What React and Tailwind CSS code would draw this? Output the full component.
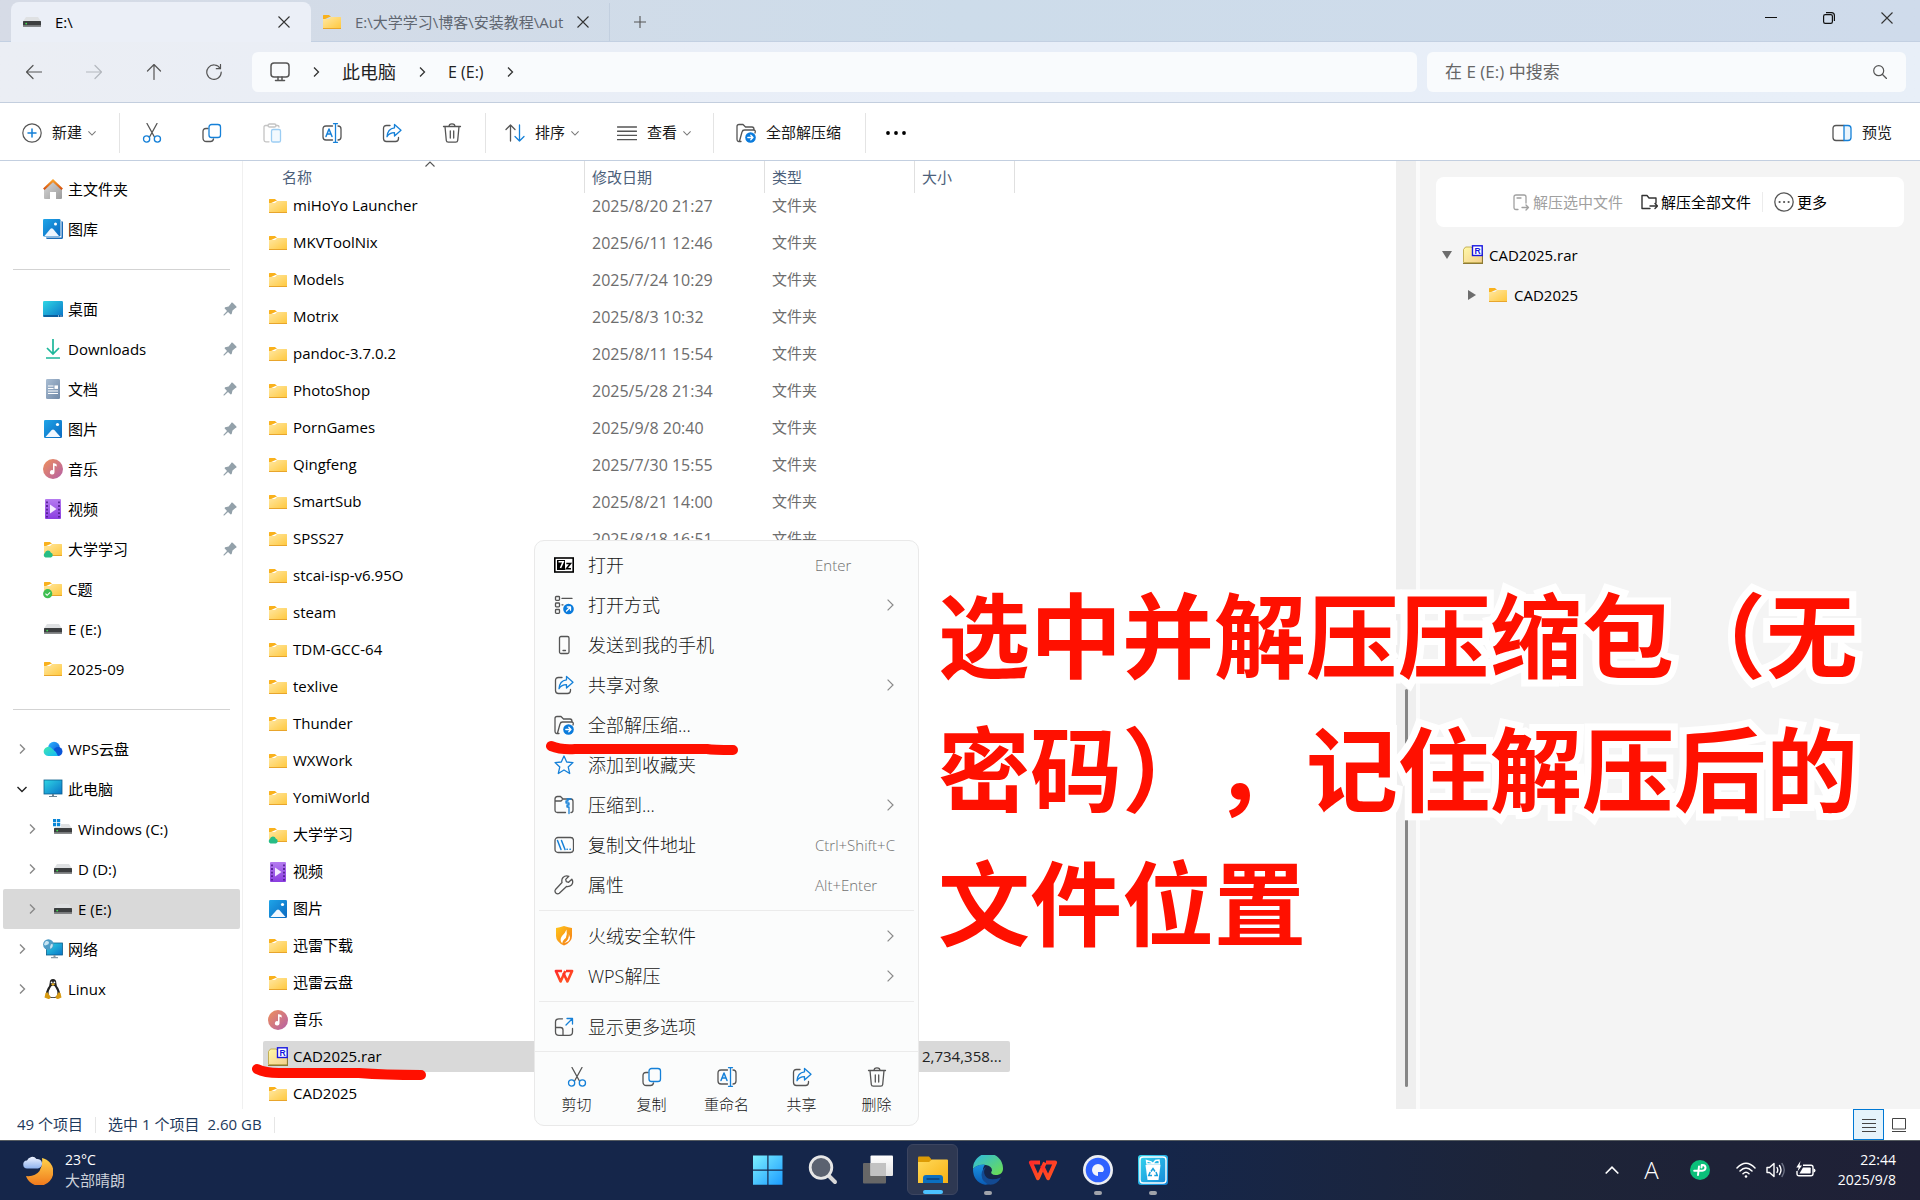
import React from "react";

const UI = "font-['Open_Sans','Noto_Sans_CJK_SC',sans-serif]";

/* ---------- shared gradients ---------- */
function Gradients() {
  const g = (id, a, b, diag) => (
    <linearGradient id={id} x1="0" y1="0" x2={diag ? "1" : "0"} y2="1">
      <stop offset="0" stopColor={a} />
      <stop offset="1" stopColor={b} />
    </linearGradient>
  );
  return (
    <svg className="absolute h-0 w-0" aria-hidden="true">
      <defs>
        {g("folder", "#ffe8a4", "#ffc83d", true)}
        {g("blue", "#1fa5e8", "#0a68c0", true)}
        {g("desk", "#2fd6e4", "#0a74c8", true)}
        {g("down", "#35c98b", "#12a6b0")}
        {g("doc", "#a9bdd3", "#6f88a6", true)}
        {g("music", "#f0915a", "#b35fa8", true)}
        {g("video", "#b57bf0", "#8a3de0")}
        {g("home", "#d8d8d8", "#9c9c9c", true)}
        {g("roof", "#f9a02b", "#d4500f")}
        {g("win", "#7df0ff", "#1b9cff", true)}
        {g("cloudA", "#3fe8b0", "#15b8f8", true)}
        {g("cloudB", "#2fb7ff", "#0a56d8", true)}
        {g("moon", "#ffd24a", "#f0781c")}
        {g("mist", "#eef3ff", "#8eb2ee")}
        {g("edgeGreen", "#2bb7e8", "#6fe04a", true)}
        {g("edgeBlue", "#1a92e0", "#0a5bb5")}
        {g("rar", "#fff9a8", "#f4cf8c", true)}
        {g("shield", "#ffc61a", "#f57a16", true)}
        {g("bin", "#35d7ee", "#1385d8", true)}
        {g("wps", "#ff2a2a", "#ff5a1f", true)}
        {g("glass", "#ffffff", "#e2e2e2")}
        {g("taskFolder", "#ffd95a", "#f7b113", true)}
      </defs>
    </svg>
  );
}

/* ---------- coloured icons ---------- */
const FolderShape = () => (
  <>
    <path d="M1 3.500Q1 3 1.600 3H7l2 2h-1.500L1 8z" fill="#f9b11c" />
    <path d="M1 7h6l2-2h9.500q.5 0 .5.500V16.500H1z" fill="url(#folder)" />
    <path d="M1 16.500h18" stroke="#e8a52c" strokeWidth="1" />
  </>
);
const Folder = () => (
  <svg viewBox="0 0 20 20" className="h-5 w-5 shrink-0"><FolderShape /></svg>
);
const FolderCloud = () => (
  <svg viewBox="0 0 20 20" className="h-5 w-5 shrink-0">
    <FolderShape />
    <path d="M2.500 18.500a2.600 2.600 0 0 1-.6-4.600 3.100 3.100 0 0 1 6-.2 2.500 2.500 0 0 1 .1 4.800z" fill="#27bd86" />
  </svg>
);
const FolderCheck = () => (
  <svg viewBox="0 0 20 20" className="h-5 w-5 shrink-0">
    <FolderShape />
    <circle cx="4.700" cy="14.700" r="4.600" fill="#3fbf52" />
    <path d="M2.500 14.700l1.600 1.600 3-3" fill="none" stroke="#fff" strokeWidth="1.100" />
  </svg>
);
const DriveShape = () => (
  <>
    <path d="M4 5h12l3 4.500H1z" fill="#dfe1e3" />
    <rect x="1" y="9" width="18" height="5.500" rx=".5" fill="#3c3e40" />
    <rect x="1" y="13" width="18" height="1.500" fill="#77797b" />
    <circle cx="4.200" cy="11.600" r=".9" fill="#3fe04f" />
  </>
);
const Drive = () => (
  <svg viewBox="0 0 20 20" className="h-5 w-5 shrink-0"><DriveShape /></svg>
);
const DriveWin = () => (
  <svg viewBox="0 0 20 20" className="h-5 w-5 shrink-0">
    <DriveShape />
    <rect width="8" height="8" fill="#fff" />
    <path d="M0 0h3.200v3.200H0zM4 0h3.200v3.200H4zM0 4h3.200v3.200H0zM4 4h3.200v3.200H4z" fill="#0a87d8" />
  </svg>
);
const Home = () => (
  <svg viewBox="0 0 20 20" className="h-5 w-5 shrink-0">
    <path d="M1 10.500L10 2l9 8.500V19a1 1 0 0 1-1 1h-5v-7H7v7H2a1 1 0 0 1-1-1z" fill="url(#home)" />
    <path d="M.8 10.200L10 1.600l9.200 8.600" fill="none" stroke="url(#roof)" strokeWidth="2.200" />
  </svg>
);
const Picture = () => (
  <svg viewBox="0 0 20 20" className="h-5 w-5 shrink-0">
    <rect x="1" y="1" width="18" height="18" rx="1.300" fill="url(#blue)" />
    <path d="M2.500 18L8.700 11q1.300-1.200 2.600 0l6.200 7z" fill="#f2f8ff" />
    <circle cx="14.500" cy="5.500" r="1.600" fill="#fff" />
  </svg>
);
const Gallery = () => (
  <svg viewBox="0 0 20 20" className="h-5 w-5 shrink-0">
    <path d="M3 18.500h15.500V2q1.500 0 1.500 1.500v15q0 1.500-1.500 1.500h-14q-1.500 0-1.500-1.500z" fill="#1a6bb8" />
    <rect width="17.500" height="17.500" rx="1.300" fill="url(#blue)" />
    <path d="M1.500 17L7.500 9.800q1.200-1 2.400 0L16 17z" fill="#eef6ff" />
    <circle cx="12.500" cy="5" r="1.500" fill="#fff" />
  </svg>
);
const Desktop = () => (
  <svg viewBox="0 0 20 20" className="h-5 w-5 shrink-0">
    <rect y="2" width="20" height="16" rx="1.200" fill="url(#desk)" />
    <path d="M.5 17h19" stroke="#0a4e8e" strokeWidth="1.500" />
    <path d="M15 17h1M17.500 17h1" stroke="#fff" strokeWidth="1" />
  </svg>
);
const Download = () => (
  <svg viewBox="0 0 20 20" className="h-5 w-5 shrink-0" fill="none" stroke="#1db79a" strokeWidth="1.700">
    <path d="M10 0v14.500M4 9l6 6 6-6M3 19h14" />
  </svg>
);
const Doc = () => (
  <svg viewBox="0 0 20 20" className="h-5 w-5 shrink-0">
    <rect x="3" width="14" height="20" rx="1.300" fill="url(#doc)" />
    <path d="M5 7h5.500M5 9.500h5.500M5 12h10M5 14.500h10" stroke="#fff" strokeWidth="1.200" />
    <rect x="11.500" y="6.400" width="3.500" height="3.500" fill="#fff" />
  </svg>
);
const Music = () => (
  <svg viewBox="0 0 20 20" className="h-5 w-5 shrink-0">
    <circle cx="10" cy="10" r="10" fill="url(#music)" />
    <path d="M10 13V4.200q2.800-.4 3.800 1.600l-.3 2q-.8-1.200-2-1.100V13.300a2.300 2.200 0 1 1-1.500-2z" fill="#fff" />
  </svg>
);
const Video = () => (
  <svg viewBox="0 0 20 20" className="h-5 w-5 shrink-0">
    <rect x="2" width="16" height="20" rx="1" fill="url(#video)" />
    <path d="M4 2.500v16M16 2.500v16" stroke="#4a1a86" strokeWidth="1.600" strokeDasharray="1.800 1.800" />
    <path d="M7 5.500l6.500 4.500L7 14.500z" fill="#f4eaff" />
  </svg>
);
const WpsCloud = () => (
  <svg viewBox="0 0 20 20" className="h-5 w-5 shrink-0">
    <circle cx="11" cy="8.500" r="5.800" fill="url(#cloudB)" />
    <circle cx="15" cy="12.500" r="4.500" fill="#0a56d8" />
    <path d="M5.200 17a4.600 4.600 0 1 1 3.200-8q4.500 3 6.600 8z" fill="url(#cloudA)" />
  </svg>
);
const Pc = () => (
  <svg viewBox="0 0 20 20" className="h-5 w-5 shrink-0">
    <rect x="1" y="1" width="18" height="14" fill="url(#desk)" stroke="#0b5e8c" strokeWidth=".8" />
    <path d="M9 15h2v2H9zM6 17h8v1H6z" fill="#6d8494" />
  </svg>
);
const Network = () => (
  <svg viewBox="0 0 20 20" className="h-5 w-5 shrink-0">
    <rect x="3.500" y="4" width="16" height="12" fill="url(#desk)" stroke="#0b5e8c" strokeWidth=".8" />
    <path d="M10.500 16h2v2h-2zM8 18h7v1.300H8z" fill="#8b9aa5" />
    <circle cx="5.400" cy="5.500" r="5.300" fill="#4f9cc6" />
    <path d="M3 2q3-.5 3 1.500T3.500 6Q2 7 1 5.500 1.500 3 3 2zM8 5l2 .5q0 3-2.500 4.500-1-2 .5-5z" fill="#c7e4f2" />
  </svg>
);
const Tux = () => (
  <svg viewBox="0 0 20 20" className="h-5 w-5 shrink-0">
    <path d="M10 0q3.300 0 3.300 4 0 2.500 2 5 2.200 3.500 1.400 7.500-1 2.500-6.700 2.500T3.300 16.500q-.8-4 1.400-7.500 2-2.500 2-5 0-4 3.300-4z" fill="#222" />
    <path d="M10 6.500q2 0 3 3 2.500 4 .5 8-3.500 1.500-7 0-2-4 .5-8 1-3 3-3z" fill="#fff" />
    <path d="M8 5.300l2-1.200 2 1.200-2 1.500z" fill="#eeb11c" />
    <circle cx="8.600" cy="3.400" r=".9" fill="#fff" /><circle cx="11.400" cy="3.400" r=".9" fill="#fff" />
    <path d="M2.500 14l2-.8 3.300 5q-.5 2-2.500 1.700L1.500 18.500zM17.500 14l-2-.8-3 5q.5 2 2.500 1.700l3.500-1.400z" fill="#d79a12" />
  </svg>
);
const Rar = () => (
  <svg viewBox="0 0 20 20" className="h-5 w-5 shrink-0">
    <path d="M.5 4.500L2.500 2h6l1 1.500h10v14H.5z" fill="url(#rar)" stroke="#b9a13a" strokeWidth=".8" />
    <path d="M0 18.500h19.500V8" fill="none" stroke="#8d7a36" strokeWidth="1.200" />
    <rect x="9.500" y=".8" width="9.700" height="9.700" fill="#fff" stroke="#1717e0" strokeWidth="1.400" />
    <text x="11.600" y="8.700" fontSize="8.500" fontWeight="700" fill="#1717e0" fontFamily="Liberation Sans, sans-serif">R</text>
  </svg>
);
const Pin = () => (
  <svg viewBox="0 0 14 14" className="h-[14px] w-[14px] shrink-0">
    <path d="M8.300.8q.7-.8 1.400 0l3.500 3.500q.8.700 0 1.400l-.7.300-3 2.500-.8 3.500-1 .6L5 10 1.300 13.500H.5v-.8L4 9 1.500 6.300l.6-1 3.500-.8L8 1.500z" fill="#93a1aa" />
  </svg>
);

/* ---------- line icons ---------- */
const Line = ({ children, className = "h-5 w-5", w = 1.3, box = 20 }) => (
  <svg viewBox={`0 0 ${box} ${box}`} className={`${className} shrink-0`} fill="none" stroke="#555" strokeWidth={w} strokeLinecap="round" strokeLinejoin="round">
    {children}
  </svg>
);
const B = "#1580d8";
const Chevron = ({ dir = "right", className = "h-[10px] w-[10px]", color = "#333", w = 1.3 }) => {
  const d = { right: "M3 .5l4.500 4.500L3 9.500", down: "M.5 3L5 7.500 9.500 3", up: "M.5 7.500L5 3l4.500 4.500" }[dir];
  return (
    <svg viewBox="0 0 10 10" className={`${className} shrink-0`} fill="none" stroke={color} strokeWidth={w}>
      <path d={d} />
    </svg>
  );
};
const Cut = () => (
  <Line>
    <path d="M5 .5l7.300 13.200M15 .5L7.700 13.700" />
    <g stroke={B}><circle cx="4.600" cy="16" r="3.100" /><circle cx="15.400" cy="16" r="3.100" /></g>
  </Line>
);
const Copy = () => (
  <Line>
    <path d="M6 5.500H4q-3 0-3 3V15q0 3.500 3.500 3.500h4q2.500 0 3-2.500" />
    <rect x="7" y="1.500" width="11.500" height="13" rx="2.600" stroke={B} />
  </Line>
);
const Paste = () => (
  <Line>
    <g stroke="#c4c4c4"><path d="M6 2.500H3.500Q2 2.500 2 4v13q0 1.800 1.800 1.800H7M14 2.500h1.500Q17 2.500 17 4" /><rect x="6" y="1" width="8" height="3" rx="1.500" /></g>
    <rect x="9.500" y="6.500" width="9" height="12.500" rx="1.600" stroke="#9ccdf3" fill="#f3f9fe" />
  </Line>
);
const Rename = () => (
  <Line>
    <path d="M10.500 3H4Q1 3 1 6v8q0 3 3 3h6.500M16 3q3 0 3 3v8q0 3-3 3" />
    <g stroke={B}><path d="M13.500 1v18M11.500.700h4M11.500 19.300h4" /><path d="M4 13.500L7 6l3 7.500M5 11h4" strokeWidth="1.500" /></g>
  </Line>
);
const Share = () => (
  <Line>
    <path d="M8 2.500H4.500Q1.500 2.500 1.500 5.500v10q0 3 3 3h9q3 0 3-3v-1" />
    <path d="M12.500 1.500l6.500 5.700-6.500 5.800V9.700q-5 0-7.500 4 .5-8 7.500-8.900z" stroke={B} />
  </Line>
);
const Trash = () => (
  <Line>
    <path d="M1.500 3.500h17M7 3.500q0-2.700 3-2.700t3 2.700M3 3.500l1.300 14q.2 1.700 2 1.700h7.400q1.800 0 2-1.700L17 3.500M8.300 8v7M11.700 8v7" />
  </Line>
);
const ExtractAll = () => (
  <Line>
    <path d="M5 18.500H3q-2 0-2-2.500V3.500q0-2 2-2h4l2.500 2.500H16q2 0 2 2.500M3.500 18L6 9q.5-2 2.500-2h9q2.500 0 1.500 3" />
    <circle cx="14.500" cy="14.500" r="5.300" fill="#0a7bdc" stroke="none" />
    <path d="M11.800 14.500h5M14.800 12.300l2.200 2.200-2.200 2.200" stroke="#fff" />
  </Line>
);
const OpenWith = () => (
  <Line>
    <rect x="1.500" y="1.500" width="4" height="3.800" rx=".8" /><rect x="1.500" y="8" width="4" height="3.800" rx=".8" /><rect x="1.500" y="14.500" width="4" height="3.800" rx=".8" />
    <path d="M8 3.400h10M8 9.800h1" />
    <circle cx="14.500" cy="14" r="5.300" fill="#0a7bdc" stroke="none" />
    <path d="M12.500 16l4-4M13.300 12h3.200v3.200" stroke="#fff" />
  </Line>
);
const SevenZip = () => (
  <svg viewBox="0 0 20 20" className="h-5 w-5 shrink-0">
    <rect x=".8" y="3" width="18.400" height="14" fill="#fff" stroke="#000" strokeWidth="1.600" />
    <rect x="3" y="5" width="8" height="10" fill="#000" />
    <path d="M4.500 6.800h4.700L6.500 13" fill="none" stroke="#fff" strokeWidth="1.600" />
    <path d="M12.300 8.500h4.200l-4 5.200h4.500" fill="none" stroke="#000" strokeWidth="1.600" />
  </svg>
);
const Phone = () => (
  <Line><rect x="5.500" y="1.500" width="9.500" height="17" rx="1.500" /><path d="M9 15.500h2.500" /></Line>
);
const Star = () => (
  <Line><path d="M10 1l2.700 6 6.300.6-4.800 4.300 1.500 6.600L10 15l-5.700 3.500 1.500-6.600L1 7.600 7.300 7z" stroke={B} /></Line>
);
const Zip = () => (
  <Line>
    <path d="M11.500 17.500H3.500Q1 17.500 1 15V4q0-2.500 2.500-2.500h3L9 4h8q2 0 2 2.500V15q0 2.500-2 2.500M1 6h6l2-2" />
    <path d="M14 4v2h-2v2h3v2h-2v2h2v6.500M13 4h4" stroke={B} />
  </Line>
);
const CopyPath = () => (
  <Line><rect x="1" y="2.500" width="18.500" height="15" rx="3" /><path d="M3.500 5.500l3.500 9M7.500 5.500l3.500 9M13 14.300h.3M16 14.300h.3" stroke={B} strokeWidth="1.500" /></Line>
);
const Wrench = () => (
  <Line><path d="M17.800 4.200l-3.200 3.100-2.300-.6-.6-2.300L14.800 1.300Q11.500 0 9 2.500 7.300 4.500 8 7.500L1.500 14.500q-1.200 1.800.3 3.500 1.700 1.500 3.500.3L12.500 11.500q3 .5 5-1.500 2.300-2.700.3-5.800z" /></Line>
);
const Shield = () => (
  <svg viewBox="0 0 20 20" className="h-5 w-5 shrink-0">
    <path d="M10 0q4.500 1.500 8 2v8q0 6-8 9.500Q2 16 2 10V2q3.500-.5 8-2z" fill="url(#shield)" />
    <path d="M12.500 3.500q-1 3-4.500 6.500-3 4 .3 7.500 0-3 3.500-5.500Q13.500 8.500 12.500 3.500zM14.800 8q1 5-4.500 9 5.500-1 5.700-5.500z" fill="#fff" />
  </svg>
);
const WpsShape = () => (
  <g fill="none" stroke="url(#wps)" strokeWidth="2.600">
    <path d="M8 5H1.900L6.600 15.500 11.300 5" strokeLinejoin="round" />
    <path d="M12 5h6.100L13.400 15.500 9.400 7" strokeLinejoin="round" />
  </g>
);
const Wps = () => <svg viewBox="0 0 20 20" className="h-5 w-5 shrink-0"><WpsShape /></svg>;
const MoreOptions = () => (
  <Line>
    <path d="M8.500 1.800H5Q1.500 1.800 1.500 5v10q0 3.300 3.500 3.300h10q3.500 0 3.500-3.300v-3.500M1.500 10.500h5q2.500 0 2.500 2.500v5.300" />
    <path d="M12 8l6.500-6.500M13 1.500h5.500V7" stroke={B} />
  </Line>
);

/* ---------- title bar ---------- */
const Cross = ({ className = "h-3 w-3" }) => (
  <svg viewBox="0 0 12 12" className={className} stroke="#333" strokeWidth="1.100"><path d="M.5.5l11 11M11.500.5l-11 11" /></svg>
);
function TabStrip() {
  return (
    <header className="flex h-[42px] shrink-0 items-end border-b border-[#c3d0e2] bg-linear-to-r from-[#d6dbe6] via-[#cddcea] to-[#cfdbeb] pl-[11px]">
      <div className="-mb-px flex h-10 w-[300px] items-center rounded-t-lg bg-[#ebeff7] pr-[21px] pl-[11px]">
        <Drive />
        <span className="ml-[13px] flex-1 text-[15px]">E:\</span>
        <button aria-label="关闭标签页"><Cross /></button>
      </div>
      <div className="flex h-[38px] w-[299px] items-center border-r border-[#c2cfdf] pr-5 pl-[11px]">
        <Folder />
        <span className="ml-[13px] text-[15px] whitespace-nowrap text-[#5f6670]">E:\大学学习\博客\安装教程\Aut</span>
        <button aria-label="关闭标签页" className="ml-auto"><Cross /></button>
      </div>
      <button aria-label="新标签页" className="flex h-[38px] w-[60px] items-center justify-center">
        <svg viewBox="0 0 12 12" className="h-3 w-3" stroke="#555" strokeWidth="1.100"><path d="M6 0v12M0 6h12" /></svg>
      </button>
      <div className="ml-auto flex self-start pr-1">
        <button aria-label="最小化" className="flex h-9 w-[58px] items-center justify-center">
          <svg viewBox="0 0 12 12" className="h-3 w-3" stroke="#111"><path d="M0 5.500h12" /></svg>
        </button>
        <button aria-label="还原" className="flex h-9 w-[58px] items-center justify-center">
          <svg viewBox="0 0 12 12" className="h-3 w-3" fill="none" stroke="#111" strokeWidth="1.200"><rect x=".6" y="2.600" width="8.800" height="8.800" rx="1.600" /><path d="M3 .6h5.500Q11.400.6 11.400 3.500V9" /></svg>
        </button>
        <button aria-label="关闭" className="flex h-9 w-[58px] items-center justify-center"><Cross /></button>
      </div>
    </header>
  );
}

/* ---------- address row ---------- */
const NavButton = ({ label, children }) => (
  <button aria-label={label} className="flex h-10 w-[60px] items-center justify-center">
    <Line className="h-4 w-4" box={16} w={1.2}>{children}</Line>
  </button>
);
function AddressRow() {
  return (
    <div className="flex h-[61px] shrink-0 items-center border-b border-[#c3cede] bg-linear-to-r from-[#ebeef4] via-[#e8eef8] to-[#e8eff8] pr-[14px] pl-1">
      <NavButton label="后退"><path d="M.5 8h15M7 1.500L.5 8 7 14.500" /></NavButton>
      <NavButton label="前进"><path d="M.5 8h15M9 1.500L15.500 8 9 14.500" stroke="#b4b8be" /></NavButton>
      <NavButton label="上移"><path d="M8 15.500V.5M1.500 7L8 .5 14.500 7" /></NavButton>
      <NavButton label="刷新"><path d="M14.200 4.500A7.200 7.200 0 1 0 15.200 8M14.500.5v4.200h-4.200" /></NavButton>
      <div className="ml-2 flex h-10 flex-1 items-center gap-[21px] rounded-md bg-[#f9fbfd] pl-[18px] text-[18px] text-[#222]">
        <Line w={1.5}><rect x="1" y="1" width="18" height="14" rx="3" /><path d="M8 15v3M12 15v3M5.500 18.500h9" /></Line>
        <Chevron />
        <button>此电脑</button>
        <Chevron />
        <button className="text-base">E (E:)</button>
        <Chevron />
      </div>
      <label className="ml-[10px] flex h-10 w-[479px] items-center rounded-md bg-[#f9fbfd] pr-[19px] pl-[18px]">
        <input aria-label="搜索" placeholder="在 E (E:) 中搜索" className="min-w-0 flex-1 bg-transparent text-[17px] outline-none placeholder:text-[#666]" />
        <Line className="h-[14px] w-[14px]" box={14} w={1.2}><circle cx="5.700" cy="5.700" r="5" /><path d="M9.500 9.500l4 4" /></Line>
      </label>
    </div>
  );
}

/* ---------- command bar ---------- */
const IconButton = ({ label, children }) => (
  <button aria-label={label} className="flex h-10 w-[60px] items-center justify-center">{children}</button>
);
const Rule = () => <span className="h-10 w-px bg-[#e4e4e4]" />;
function CommandBar() {
  return (
    <div className="flex h-[58px] shrink-0 items-center border-b border-[#c3cfe0] bg-white pt-[2px] text-[15px] text-[#1a1a1a]">
      <button className="flex h-10 w-[119px] items-center gap-[10px] pl-[22px]">
        <Line w={1.2}><circle cx="10" cy="10" r="9.200" /><path d="M10 6v8M6 10h8" stroke={B} strokeWidth="1.500" /></Line>
        新建 <Chevron dir="down" className="-ml-1 h-2 w-2" color="#777" />
      </button>
      <Rule />
      <div className="flex pr-[3px] pl-[2px]">
        <IconButton label="剪切"><Cut /></IconButton>
        <IconButton label="复制"><Copy /></IconButton>
        <IconButton label="粘贴"><Paste /></IconButton>
        <IconButton label="重命名"><Rename /></IconButton>
        <IconButton label="共享"><Share /></IconButton>
        <IconButton label="删除"><Trash /></IconButton>
      </div>
      <Rule />
      <button className="flex h-10 w-28 items-center gap-[10px] pl-[19px]">
        <Line><path d="M5.500 18V2M1 6.500L5.500 2 10 6.500" /><path d="M14.500 2v16M10 13.500l4.500 4.500 4.500-4.500" stroke={B} /></Line>
        排序 <Chevron dir="down" className="-ml-1 h-2 w-2" color="#777" />
      </button>
      <button className="flex h-10 w-[115px] items-center gap-[10px] pl-[19px]">
        <Line w={1.4}><path d="M.5 4h19M.5 8.200h19M.5 12.400h19M.5 16.600h19" /></Line>
        查看 <Chevron dir="down" className="-ml-1 h-2 w-2" color="#777" />
      </button>
      <Rule />
      <button className="flex h-10 w-[151px] items-center gap-[10px] pl-[22px]"><ExtractAll />全部解压缩</button>
      <Rule />
      <IconButton label="查看更多">
        <svg viewBox="0 0 20 4" className="h-1 w-5"><circle cx="2" cy="2" r="1.900" /><circle cx="10" cy="2" r="1.900" /><circle cx="18" cy="2" r="1.900" /></svg>
      </IconButton>
      <button className="mr-7 ml-auto flex items-center gap-[10px]">
        <Line><path d="M12 2.500H4q-3 0-3 3v9q0 3 3 3h8" /><path d="M12 2.500h4q3 0 3 3v9q0 3-3 3h-4z" stroke={B} fill="#eaf5fd" /></Line>
        预览
      </button>
    </div>
  );
}

/* ---------- sidebar ---------- */
function SideItem({ icon: Icon, label, pinned, arrow, child, active }) {
  return (
    <button className={`flex h-10 w-full items-center rounded-xs pr-[3px] text-left text-[15px] ${child ? "pl-[19px]" : "pl-[9px]"} ${active ? "bg-[#d9d9d9]" : ""}`}>
      <span className="mr-[11px] flex w-5 justify-center">
        {arrow && <Chevron dir={arrow} color={arrow === "down" ? "#222" : "#888"} w={1.400} />}
      </span>
      <Icon />
      <span className="ml-[5px] flex-1 whitespace-nowrap text-black">{label}</span>
      {pinned && <Pin />}
    </button>
  );
}
const SideRule = () => <div className="flex h-10 items-center px-[10px]"><hr className="w-full border-[#d3d3d3]" /></div>;
function Sidebar() {
  return (
    <nav className="w-[243px] shrink-0 overflow-hidden border-r border-[#f0f0f0] pt-2 pr-[2px] pl-[3px]">
      <SideItem icon={Home} label="主文件夹" />
      <SideItem icon={Gallery} label="图库" />
      <SideRule />
      <SideItem icon={Desktop} label="桌面" pinned />
      <SideItem icon={Download} label="Downloads" pinned />
      <SideItem icon={Doc} label="文档" pinned />
      <SideItem icon={Picture} label="图片" pinned />
      <SideItem icon={Music} label="音乐" pinned />
      <SideItem icon={Video} label="视频" pinned />
      <SideItem icon={FolderCloud} label="大学学习" pinned />
      <SideItem icon={FolderCheck} label="C题" />
      <SideItem icon={Drive} label="E (E:)" />
      <SideItem icon={Folder} label="2025-09" />
      <SideRule />
      <SideItem icon={WpsCloud} label="WPS云盘" arrow="right" />
      <SideItem icon={Pc} label="此电脑" arrow="down" />
      <SideItem icon={DriveWin} label="Windows (C:)" arrow="right" child />
      <SideItem icon={Drive} label="D (D:)" arrow="right" child />
      <SideItem icon={Drive} label="E (E:)" arrow="right" child active />
      <SideItem icon={Network} label="网络" arrow="right" />
      <SideItem icon={Tux} label="Linux" arrow="right" />
    </nav>
  );
}

/* ---------- file list ---------- */
const FILES = [
  ["miHoYo Launcher", "2025/8/20 21:27"],
  ["MKVToolNix", "2025/6/11 12:46"],
  ["Models", "2025/7/24 10:29"],
  ["Motrix", "2025/8/3 10:32"],
  ["pandoc-3.7.0.2", "2025/8/11 15:54"],
  ["PhotoShop", "2025/5/28 21:34"],
  ["PornGames", "2025/9/8 20:40"],
  ["Qingfeng", "2025/7/30 15:55"],
  ["SmartSub", "2025/8/21 14:00"],
  ["SPSS27", "2025/8/18 16:51"],
  ["stcai-isp-v6.95O"],
  ["steam"],
  ["TDM-GCC-64"],
  ["texlive"],
  ["Thunder"],
  ["WXWork"],
  ["YomiWorld"],
  ["大学学习", , FolderCloud],
  ["视频", , Video],
  ["图片", , Picture],
  ["迅雷下载"],
  ["迅雷云盘"],
  ["音乐", , Music],
  ["CAD2025.rar", , Rar, "2,734,358..."],
  ["CAD2025"],
];
function FileList() {
  const head = "-mb-1.5 flex h-8 items-center";
  return (
    <main className="min-w-0 flex-1 overflow-hidden bg-white pl-5">
      <table className="w-[752px] table-fixed border-collapse text-left text-[15px] whitespace-nowrap">
        <colgroup>
          <col className="w-[321px]" /><col className="w-[180px]" /><col className="w-[150px]" /><col className="w-[101px]" />
        </colgroup>
        <thead className="text-[#4c607a]">
          <tr className="h-[26px]">
            <th className="p-0 font-normal">
              <div className={`relative pl-[19px] ${head}`}>名称
                <span className="absolute -top-0.5 left-[162px] flex"><Chevron dir="up" color="#555" w={1.1} /></span>
              </div>
            </th>
            <th className="p-0 font-normal"><div className={`border-l border-[#e0e0e0] pl-[7px] ${head}`}>修改日期</div></th>
            <th className="p-0 font-normal"><div className={`border-l border-[#e0e0e0] pl-[7px] ${head}`}>类型</div></th>
            <th className="p-0 font-normal"><div className={`border-x border-[#e0e0e0] pl-[7px] ${head}`}>大小</div></th>
          </tr>
        </thead>
        <tbody className="text-[#6d6d6d]">
          {FILES.map(([name, date, Icon = Folder, size]) => {
            const cell = `flex h-[31px] items-center ${size ? "bg-[#d9d9d9]" : ""}`;
            return (
              <tr key={name} className="h-[37px]">
                <td className="p-0"><div className={`gap-[5px] rounded-l-xs pl-[5px] text-black ${cell}`}><Icon />{name}</div></td>
                <td className="p-0"><div className={`pl-2 text-base ${cell}`}>{date}</div></td>
                <td className="p-0"><div className={`pl-2 ${cell}`}>{date ? "文件夹" : ""}</div></td>
                <td className="p-0 pr-[5px]"><div className={`rounded-r-xs pl-2 text-[#222] ${cell}`}>{size}</div></td>
              </tr>
            );
          })}
        </tbody>
      </table>
    </main>
  );
}

/* ---------- preview pane ---------- */
function Preview() {
  return (
    <aside className="w-[500px] shrink-0 bg-[#f4f4f4] p-4 text-[15px] text-black">
      <div className="flex h-[50px] items-center justify-center rounded-lg bg-white">
        <button className="flex items-center gap-[3px] text-[#a0a0a0]" disabled>
          <Line className="h-[17px] w-[17px]" box={17}><path d="M5 15.500H3q-2 0-2-2V3q0-2 2-2h8q2 0 2 2v6M4 4h4M9 13.500h6.500M13 11l2.500 2.500L13 16" stroke="#a0a0a0" /></Line>
          解压选中文件
        </button>
        <button className="ml-[18px] flex items-center gap-[3px]">
          <Line className="h-[17px] w-[17px]" box={17} w={1.4}><path d="M9 14.500H1V1.500h5l2 2.500h7v5M9 12h7.500M14 9.500l2.500 2.500L14 14.500" stroke="#333" /></Line>
          解压全部文件
        </button>
        <span className="mx-[11px] h-5 w-px bg-[#ececec]" />
        <button className="flex items-center gap-[3px]">
          <Line className="h-5 w-5"><circle cx="10" cy="10" r="9.200" /><path d="M5.500 10h.2M10 10h.2M14.500 10h.2" strokeWidth="2" /></Line>
          更多
        </button>
      </div>
      <ul className="mt-2 pl-[6px]">
        <li className="flex h-10 items-center">
          <svg viewBox="0 0 10 8" className="h-2 w-[10px]"><path d="M0 0h10L5 8z" fill="#6d6d6d" /></svg>
          <span className="mr-[6px] ml-[11px] flex"><Rar /></span>CAD2025.rar
        </li>
        <li className="flex h-10 items-center pl-[26px]">
          <svg viewBox="0 0 8 10" className="h-[10px] w-2"><path d="M0 0v10l8-5z" fill="#6d6d6d" /></svg>
          <span className="mr-[6px] ml-3 flex"><Folder /></span>CAD2025
        </li>
      </ul>
    </aside>
  );
}

/* ---------- status bar ---------- */
function StatusBar() {
  return (
    <footer className="flex h-[31px] shrink-0 items-center bg-white pl-[17px] text-[15px] text-[#1e395b]">
      <span className="mr-3">49 个项目</span>
      <span className="h-4 w-px bg-[#e6e6e6]" />
      <span className="ml-3">选中 1 个项目</span>
      <span className="mr-3 ml-2">2.60 GB</span>
      <span className="h-4 w-px bg-[#e6e6e6]" />
      <button aria-label="详细信息视图" className="ml-auto flex h-[31px] w-[31px] items-center justify-center border border-[#0078d4] bg-[#e5f3fb]">
        <svg viewBox="0 0 14 14" className="mt-[2px] h-[14px] w-[14px]" stroke="#444"><path d="M0 .5h14M0 4.500h14M0 8.500h14M0 12.500h14" /></svg>
      </button>
      <button aria-label="大图标视图" className="flex h-[31px] w-9 items-center justify-center pr-[6px]">
        <svg viewBox="0 0 14 14" className="h-[14px] w-[14px]" fill="none" stroke="#444"><path d="M.5.5h13v10.500H.5zM0 13.500h14" /></svg>
      </button>
    </footer>
  );
}

/* ---------- context menu ---------- */
function MenuItem({ icon: Icon, label, hint, more }) {
  return (
    <button role="menuitem" className="flex h-10 w-full items-center pr-[22px] pl-[19px] text-left">
      <Icon />
      <span className="ml-[14px] flex-1 text-[18px]">{label}</span>
      {hint && <span className="w-[81px] text-[15px] whitespace-nowrap text-[#707070]">{hint}</span>}
      {more && <Chevron className="h-3 w-3" color="#8a8a8a" w={1} />}
    </button>
  );
}
function ContextMenu() {
  const rule = <hr className="mx-1 my-[5px] border-[#ebebeb]" />;
  return (
    <div role="menu" className="absolute top-[540px] left-[534px] w-[385px] rounded-[10px] border border-[#e9e9e9] bg-[#fbfcfc] pt-1 font-light text-[#151515]">
      <MenuItem icon={SevenZip} label="打开" hint="Enter" />
      <MenuItem icon={OpenWith} label="打开方式" more />
      <MenuItem icon={Phone} label="发送到我的手机" />
      <MenuItem icon={Share} label="共享对象" more />
      <MenuItem icon={ExtractAll} label="全部解压缩..." />
      <MenuItem icon={Star} label="添加到收藏夹" />
      <MenuItem icon={Zip} label="压缩到..." more />
      <MenuItem icon={CopyPath} label="复制文件地址" hint="Ctrl+Shift+C" />
      <MenuItem icon={Wrench} label="属性" hint="Alt+Enter" />
      {rule}
      <MenuItem icon={Shield} label="火绒安全软件" more />
      <MenuItem icon={Wps} label="WPS解压" more />
      {rule}
      <MenuItem icon={MoreOptions} label="显示更多选项" />
      <div className="mt-1 flex border-t border-[#ebebeb] px-1 pt-[15px] pb-[10px]">
        {[[Cut, "剪切"], [Copy, "复制"], [Rename, "重命名"], [Share, "共享"], [Trash, "删除"]].map(([Icon, label]) => (
          <button key={label} role="menuitem" className="flex flex-1 flex-col items-center gap-[7px] text-[15px] leading-[21px]">
            <Icon />{label}
          </button>
        ))}
      </div>
      <svg viewBox="0 0 195 20" className="absolute top-[198px] left-[10px] h-5 w-[195px]" fill="none" stroke="#ff1000" strokeWidth="10" strokeLinecap="round" strokeLinejoin="round">
        <path d="M6 7q10 4 24 3h132q6 1 26 1" />
      </svg>
    </div>
  );
}

/* ---------- taskbar ---------- */
const TaskButton = ({ label, active, running, children }) => (
  <button aria-label={label} className={`relative mx-[2px] flex h-[51px] w-[51px] items-center justify-center rounded-md ${active ? "border border-[#3c4560] bg-[#2e3852]" : ""}`}>
    <svg viewBox="0 0 30 30" className="h-[30px] w-[30px]">{children}</svg>
    {active && <span className="absolute bottom-0 h-1 w-5 rounded-full bg-[#4cc2ff]" />}
    {running && <span className="absolute bottom-0 h-1 w-2 rounded-full bg-[#a0a3aa]" />}
  </button>
);
function Taskbar() {
  return (
    <div className="grid h-[60px] shrink-0 grid-cols-[1fr_auto_1fr] items-center border-t border-[#565c60] bg-linear-to-r from-[#15264a] from-60% via-[#1d2438] via-80% to-[#1f2036] pb-[2px] text-white">
      <button className="flex items-center gap-3 pl-[23px] text-left text-[15px] leading-5">
        <svg viewBox="0 0 30 30" className="h-[30px] w-[30px]">
          <path d="M19 3a14 14 0 1 1-16 18Q12 22 16.500 16 20 10 19 3z" fill="url(#moon)" />
          <path d="M4.500 13.500a4 4 0 0 1-.5-8 5.500 5.500 0 0 1 9.500-1.500 4.800 4.800 0 0 1 1.500 9.500z" fill="url(#mist)" />
        </svg>
        <span><span className="block text-[14px]">23°C</span><span className="block text-[#ccd1da]">大部晴朗</span></span>
      </button>
      <div className="flex">
        <TaskButton label="开始">
          <path d="M0 .5h14.300v14H0zM15.500.5h14v14h-14zM0 15.700h14.300v14H0zM15.500 15.700h14v14h-14z" fill="url(#win)" />
        </TaskButton>
        <TaskButton label="搜索">
          <path d="M20 20l7 7" stroke="#d8d8d8" strokeWidth="4" strokeLinecap="round" />
          <circle cx="13" cy="12.500" r="10.800" fill="#5b6270" stroke="#e6e6e6" strokeWidth="2.800" />
        </TaskButton>
        <TaskButton label="任务视图">
          <rect y="8" width="23" height="20.500" rx="1" fill="#676767" />
          <rect x="7.500" y=".5" width="22.500" height="20.500" rx="1" fill="url(#glass)" />
          <rect x="7.500" y="8" width="15.500" height="13" fill="#c2c2c2" />
        </TaskButton>
        <TaskButton label="文件资源管理器" active>
          <path d="M0 2.500Q0 1.500 1 1.500h10l3 3.500v6H0z" fill="#dd9b05" />
          <path d="M0 7h11l3-2.500h15q1 0 1 1V28H0z" fill="url(#taskFolder)" />
          <path d="M5 28v-5q0-3 3-3h14q3 0 3 3v5z" fill="#0b6fc0" />
          <path d="M9 24h12" stroke="#0a3f78" strokeWidth="1.300" strokeLinecap="round" />
        </TaskButton>
        <TaskButton label="Edge" running>
          <path d="M0 14a15 15 0 0 1 30-1q.3 5-4 6.500-5 1.500-7.500-1-.8-1 .5-3Q19 11 13 10 5 9 0 14z" fill="url(#edgeGreen)" />
          <path d="M0 14Q4 9 12 9.500q-3 3.500-1.500 9Q13 26 22 26.500 17 30 12 29.800 0 27 0 14z" fill="url(#edgeBlue)" />
          <path d="M13.500 12q-4 3-1.500 8.500 4 6.500 16 2-4 7-10.500 7.300Q9 28 8.500 20q0-6 5-8z" fill="#134a92" />
        </TaskButton>
        <TaskButton label="WPS">
          <g transform="scale(1.5)"><WpsShape /></g>
        </TaskButton>
        <TaskButton label="夸克" running>
          <circle cx="15" cy="15" r="15" fill="#eceef2" />
          <circle cx="15" cy="15" r="12.300" fill="#2f62ff" />
          <path d="M15 9a6 6 0 1 0 0 12V17h4.800L21 15a6 6 0 0 0-6-6z" fill="#f3f5fa" />
        </TaskButton>
        <TaskButton label="清理" running>
          <rect width="30" height="30" rx="3" fill="url(#bin)" />
          <rect x="2" y="2" width="26" height="26" rx="3" fill="none" stroke="#fff" strokeWidth="1.400" />
          <path d="M7.500 10h15l-2 15H9.500z" fill="#fff" />
          <path d="M9 9L8.500 5.500 13 7l2 1.500L17.500 5.500 21 5l.5 4z" fill="none" stroke="#fff" strokeWidth="1.400" />
          <g fill="none" stroke="#17a0dc" strokeWidth="1.500">
            <path d="M13 16.500l2-3 2 3M18 17l1.300 3.500h-3M14 20.500h-3.300l1.500-3.500" />
          </g>
        </TaskButton>
      </div>
      <div className="flex items-center justify-end pr-6">
        <button aria-label="显示隐藏的图标" className="mr-[25px] flex"><Chevron dir="up" className="h-[14px] w-[14px]" color="#fff" w={1.2} /></button>
        <button className="mr-[31px] text-[24px] leading-none font-light">A</button>
        <svg viewBox="0 0 20 20" className="mr-[26px] h-5 w-5">
          <circle cx="10" cy="10" r="10" fill="#0bbf7a" />
          <path d="M9 6.500L8 15M4.200 10.800h8q3.300-.3 3.300-3T12.500 5h-.8l-.2 2.500" fill="none" stroke="#fff" strokeWidth="2" strokeLinecap="round" strokeLinejoin="round" />
        </svg>
        <button aria-label="网络、音量与电池" className="mr-[22px] flex items-center gap-[10px]">
          <svg viewBox="0 0 20 18" className="h-[18px] w-5" fill="none" stroke="#fff" strokeWidth="1.500" strokeLinecap="round">
            <path d="M1 7q9-9.500 18 0M4 10q6-6 12 0M7 12.800q3-3 6 0" /><circle cx="10" cy="15.500" r="1.300" fill="#fff" stroke="none" />
          </svg>
          <svg viewBox="0 0 20 18" className="h-[18px] w-5" fill="none" stroke="#fff" strokeWidth="1.400" strokeLinecap="round" strokeLinejoin="round">
            <path d="M1 6.500h2.500L8 2.500v13L3.500 11.500H1zM11 6.500q1.500 2.500 0 5M13.500 4.500q3 4.500 0 9" /><path d="M16 2.500q4.500 6.500 0 13" stroke="#6b7083" />
          </svg>
          <svg viewBox="0 0 20 18" className="h-[18px] w-5" fill="none" stroke="#fff" strokeWidth="1.400" strokeLinejoin="round">
            <path d="M7 4.200h8q2 0 2 2v6.500q0 2-2 2H3q-2 0-2-2V10" /><path d="M7 6.500h7q.7 0 .7.700v4.500q0 .8-.7.800H3.500z" fill="#fff" stroke="none" /><path d="M17.500 7.500q2 0 2 2t-2 2z" fill="#fff" stroke="none" /><path d="M4.500 0L.3 6.500h2.400L1.500 10.500 6 4.500H3.500z" fill="#fff" stroke="none" />
          </svg>
        </button>
        <button className="text-right text-[14px] leading-5"><span className="block">22:44</span><span className="block">2025/9/8</span></button>
      </div>
    </div>
  );
}

export default function App() {
  return (
    <div className={`relative flex h-screen flex-col overflow-hidden bg-white ${UI}`}>
      <Gradients />
      <TabStrip />
      <AddressRow />
      <CommandBar />
      <div className="flex min-h-0 flex-1">
        <Sidebar />
        <FileList />
        <div className="flex w-5 shrink-0 flex-col items-center bg-[#efefef] pb-[22px]">
          <span className="mt-auto h-[43%] w-[3px] rounded-full bg-[#868686]" />
        </div>
        <div className="w-1 shrink-0 bg-[#fbfbfb]" />
        <Preview />
      </div>
      <StatusBar />
      <Taskbar />

      <ContextMenu />
      <svg viewBox="0 0 180 20" className="absolute top-[1062px] left-[250px] h-5 w-[180px]" fill="none" stroke="#ff1000" strokeWidth="10" strokeLinecap="round" strokeLinejoin="round">
        <path d="M7 7q8 4 22 4h80q25 2 62 2" />
      </svg>
      <p className="absolute top-[564px] left-[938px] text-[92px] leading-[134px] font-bold whitespace-nowrap text-[#ff1000] [text-spacing-trim:space-all] [-webkit-text-stroke:14px_white] [paint-order:stroke_fill] [stroke-linejoin:round] font-['Noto_Sans_CJK_SC',sans-serif]">
        选中并解压压缩包（无<br />密码），记住解压后的<br />文件位置
      </p>
    </div>
  );
}
